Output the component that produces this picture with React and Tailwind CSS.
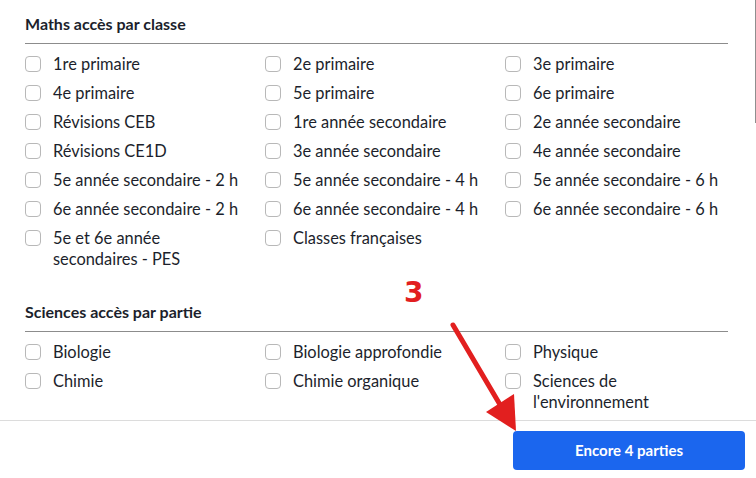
import React from "react";

const maths = [
  "1re primaire",
  "2e primaire",
  "3e primaire",
  "4e primaire",
  "5e primaire",
  "6e primaire",
  "Révisions CEB",
  "1re année secondaire",
  "2e année secondaire",
  "Révisions CE1D",
  "3e année secondaire",
  "4e année secondaire",
  "5e année secondaire - 2 h",
  "5e année secondaire - 4 h",
  "5e année secondaire - 6 h",
  "6e année secondaire - 2 h",
  "6e année secondaire - 4 h",
  "6e année secondaire - 6 h",
  "5e et 6e année secondaires - PES",
  "Classes françaises",
];

const sciences = [
  "Biologie",
  "Biologie approfondie",
  "Physique",
  "Chimie",
  "Chimie organique",
  "Sciences de l'environnement",
];

function Item({ label }) {
  return (
    <label className="flex items-start gap-3">
      <span className="flex h-[21px] items-center shrink-0">
        <span className="block h-4 w-4 rounded-[4px] border-[1.5px] border-[#b8b8b8] bg-white" />
      </span>
      <span className="max-w-[192px] text-[16.4px] leading-[21px] text-[#1c1f2c]">{label}</span>
    </label>
  );
}

function Section({ title, items, className }) {
  return (
    <div className={className}>
      <h2 className="mr-[28px] border-b border-[#8c8c8c] pb-[7px] text-[16px] font-bold leading-[24px] text-[#1c1f2c]">
        {title}
      </h2>
      <div className="mt-[9px] grid grid-cols-[240px_240px_240px] gap-y-2">
        {items.map((l) => (
          <Item key={l} label={l} />
        ))}
      </div>
    </div>
  );
}

export default function App() {
  return (
    <div
      className="relative h-[478px] w-[756px] overflow-hidden bg-white"
      style={{ fontFamily: "Lato, 'Noto Sans', sans-serif" }}
    >
      <div className="h-[420px] pl-[25px] pt-[12px]">
        <Section title="Maths accès par classe" items={maths} />
        <Section title="Sciences accès par partie" items={sciences} className="mt-[31px]" />
      </div>
      <div className="flex justify-end border-t border-[#dcdcdc] pr-[11px] pt-[10px]">
        <button className="h-[39px] w-[232px] rounded-[4px] bg-[#1b66ee] text-[15px] font-bold text-white">
          Encore 4 parties
        </button>
      </div>

      <div className="absolute right-0 top-0 h-[123px] w-[1.5px] bg-[#8f8f8f]" />

      <span
        className="absolute left-[404px] top-[279px] text-[28px] font-bold leading-none text-[#e21f1f]"
        style={{ fontFamily: "'DejaVu Sans', sans-serif" }}
      >
        3
      </span>
      <svg className="pointer-events-none absolute left-0 top-0" width="756" height="478">
        <line x1="453" y1="325" x2="502" y2="408" stroke="#e21f1f" strokeWidth="5" strokeLinecap="round" />
        <polygon points="486,412 514,394 516,431" fill="#e21f1f" />
      </svg>
    </div>
  );
}
